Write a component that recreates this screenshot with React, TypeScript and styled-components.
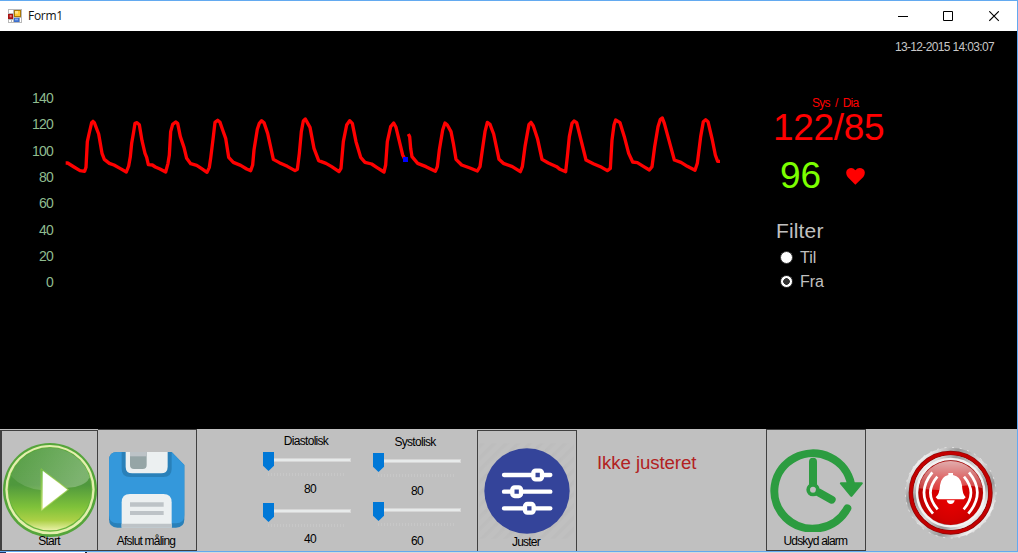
import React from 'react';
import styled, { createGlobalStyle } from 'styled-components';

const GlobalStyle = createGlobalStyle`
  * { box-sizing: border-box; }
  body { margin: 0; font-family: "Liberation Sans", Arial, sans-serif; }
  svg { display: block; flex: none; }
`;

const Screen = styled.div`
  width: 1018px;
  height: 553px;
  display: flex;
  flex-direction: column;
  overflow: hidden;
`;

const Window = styled.div`
  height: 552px;
  flex: none;
  display: flex;
  flex-direction: column;
  border: solid #63aaf0;
  border-width: 1px 1px 1px 0;
`;

const Desktop = styled.div`
  height: 1px;
  background: linear-gradient(90deg, #1d3563 6px, #fff 6px 85px, #222 85px 87px, #d9d9d9 87px);
`;

const TitleBar = styled.header`
  height: 30px;
  flex: none;
  display: flex;
  align-items: center;
  padding-left: 8px;
  background: #fff;
`;

const Title = styled.span`
  flex: 1;
  margin-left: 6px;
  font: 12px/16px "Open Sans", "Liberation Sans", sans-serif;
  letter-spacing: -0.3px;
  color: #111;
`;

const CaptionButton = styled.span`
  width: 46px;
  height: 29px;
  display: flex;
  align-items: center;
  justify-content: center;
`;

const Monitor = styled.main`
  height: 398px;
  flex: none;
  display: flex;
  background: #000;
`;

const Axis = styled.div`
  width: 54px;
  flex: none;
  padding: 54px 1px 0 0;
  text-align: right;
`;

const AxisLabel = styled.div`
  height: 26.35px;
  line-height: 26.3px;
  font-size: 14px;
  letter-spacing: -0.8px;
  color: #8fbc8f;
`;

const Readings = styled.section`
  flex: 1;
  display: flex;
  flex-direction: column;
  padding-left: 43px;
`;

const Text = styled.div<{ $size: number; $color: string; $track?: number; $line?: number; $top?: number; $left?: number }>`
  font-size: ${p => p.$size}px;
  line-height: ${p => p.$line ?? p.$size}px;
  letter-spacing: ${p => p.$track ?? 0}px;
  color: ${p => p.$color};
  margin-top: ${p => p.$top ?? 0}px;
  margin-left: ${p => p.$left ?? 0}px;
  white-space: pre;
`;

const Timestamp = styled(Text)`
  align-self: flex-end;
  margin-right: 23px;
`;

const PulseRow = styled.div`
  display: flex;
  align-items: center;
  gap: 25px;
  height: 40px;
  margin-top: 12px;
  padding-left: 7px;
`;

const RadioRow = styled.div`
  display: flex;
  align-items: center;
  gap: 7px;
  height: 24px;
  padding-left: 7px;
`;

const RadioGroup = styled.div`
  margin-top: 2px;
`;

const Radio = styled.span<{ $checked?: boolean }>`
  width: 13px;
  height: 13px;
  border-radius: 50%;
  border: 1px solid #333;
  background: ${p => (p.$checked ? 'radial-gradient(circle, #333 0 3px, #fff 3.6px)' : '#fff')};
`;

const Controls = styled.footer`
  height: 122px;
  flex: none;
  display: flex;
  align-items: flex-start;
  background: #c0c0c0;
`;

const Tile = styled.button<{ $w: number; $h: number; $top?: number; $left?: number; $sides?: string }>`
  display: grid;
  flex: none;
  width: ${p => p.$w}px;
  height: ${p => p.$h}px;
  margin: ${p => p.$top ?? 0}px 0 0 ${p => p.$left ?? 0}px;
  padding: 0;
  border: solid #404040;
  border-width: ${p => p.$sides ?? '1px'};
  background: #c0c0c0;
  font-family: inherit;
  overflow: hidden;
`;

const TileIcon = styled.span<{ $x: number; $y: number }>`
  grid-area: 1 / 1;
  place-self: start;
  margin: ${p => p.$y}px 0 0 ${p => p.$x}px;
`;

const TileCaption = styled.span`
  grid-area: 1 / 1;
  place-self: end center;
  margin: 0 2px 2px 0;
  font-size: 12px;
  line-height: 14px;
  letter-spacing: -0.8px;
  white-space: nowrap;
  color: #000;
`;

const SliderColumn = styled.div<{ $left: number; $top: number }>`
  width: 88px;
  flex: none;
  display: flex;
  flex-direction: column;
  margin-left: ${p => p.$left}px;
  padding-top: ${p => p.$top}px;
`;

const SliderText = styled.span<{ $top?: number; $shift?: number }>`
  align-self: center;
  margin: ${p => p.$top ?? 0}px 0 0 ${p => p.$shift ?? 0}px;
  font-size: 12px;
  line-height: 14px;
  letter-spacing: -0.7px;
  color: #000;
`;

const SliderBox = styled.div<{ $top: number }>`
  height: 24px;
  margin-top: ${p => p.$top}px;
  padding: 6px 0 0 2px;
`;

const Track = styled.div`
  height: 4px;
  background: #e7eaea;
  border: 1px solid #d6d6d6;
`;

const Thumb = styled.div`
  width: 11px;
  height: 19px;
  margin: -10px 0 0 -2px;
  background: #0078d7;
  clip-path: polygon(0 0, 100% 0, 100% 72%, 50% 100%, 0 72%);
`;

const Ticks = styled.div`
  height: 3px;
  margin: 2px 5px 0 3px;
  background: repeating-linear-gradient(90deg, #c7c7c7 0 1px, #c0c0c0 1px 3px);
`;

const AlarmButton = styled.div`
  margin: 18px 0 0 39px;
`;

const Slider = ({ top }: { top: number }) => (
  <SliderBox $top={top}>
    <Track />
    <Thumb />
    <Ticks />
  </SliderBox>
);

/* Trace samples, three units to a pixel */
const traceBefore =
  '197,489 203,489 222,501 240,512 254,514 258,502 262,425 267,402 275,368 279,364 283,368 296,402 306,460 313,478 328,490 342,495 360,505 379,516 386,498 391,470 395,430 401,395 405,370 411,368 418,374 426,422 435,460 440,472 445,494 457,495 466,501 480,507 497,516 504,490 508,465 512,395 518,373 527,366 533,370 541,410 552,442 560,475 572,491 590,496 605,506 621,517 628,502 632,475 640,410 645,367 653,361 660,367 668,390 677,415 686,472 700,487 722,496 740,507 752,512 758,495 762,450 772,388 778,370 785,362 792,368 803,400 820,478 838,488 862,499 885,512 892,508 898,460 904,395 910,363 916,357 922,368 930,382 942,445 956,482 978,490 995,500 1017,515 1023,505 1030,425 1040,375 1049,362 1057,370 1068,425 1082,472 1095,487 1115,492 1130,502 1152,516 1157,495 1162,425 1172,380 1181,369 1188,382 1208,465 1213,475';
const traceAfter =
  '1225,402 1229,410 1232,445 1236,470 1253,490 1278,500 1306,514 1312,500 1318,450 1328,390 1335,369 1342,375 1353,395 1360,430 1368,478 1385,495 1410,504 1432,513 1440,500 1447,450 1455,395 1462,367 1470,373 1481,402 1497,478 1510,490 1537,500 1561,515 1567,500 1575,440 1583,395 1587,373 1593,367 1600,378 1613,418 1626,478 1645,489 1670,500 1680,508 1697,515 1702,470 1708,410 1716,370 1722,363 1730,368 1743,420 1758,480 1780,491 1805,502 1822,512 1831,505 1836,420 1842,375 1847,360 1860,368 1873,410 1886,460 1898,486 1912,488 1930,499 1948,510 1956,500 1964,440 1974,380 1981,358 1987,354 1993,370 2008,425 2023,480 2043,487 2062,499 2085,511 2092,490 2102,410 2110,365 2117,359 2124,365 2137,420 2146,465 2153,484 2160,484';

const Trace = () => (
  <svg width="676" height="398" viewBox="162 93 2028 1194">
    <g fill="none" stroke="#f00" strokeWidth="10" strokeLinejoin="round">
      <polyline points={traceBefore} />
      <polyline points={traceAfter} />
    </g>
    <rect x="1209" y="471" width="15" height="15" fill="#00f" />
  </svg>
);

const FormIcon = () => (
  <svg width="14" height="14" viewBox="0 0 42 42">
    <rect width="42" height="42" fill="#b9b9b9" />
    <path d="M3 3h12v9H3zM3 33h6v6H3zM12 33h3v6h-3zM36 27h3v12h-3z" fill="#fff" />
    <rect x="18" y="3" width="21" height="21" fill="#a87908" />
    <rect x="21" y="6" width="15" height="15" fill="#fc3" />
    <rect x="21" y="6" width="9" height="8" fill="#ffe38a" />
    <rect x="0" y="15" width="15" height="15" fill="#a51212" />
    <rect x="5" y="18" width="6" height="7" fill="#ec7777" />
    <rect x="18" y="27" width="16" height="12" fill="#3c6fce" />
    <rect x="21" y="29" width="9" height="5" fill="#83aef2" />
  </svg>
);

const Heart = () => (
  <svg width="19" height="18" viewBox="0 0 57 54">
    <path d="M28 53 5 30Q-4 16 5 7q13-10 23 3Q39-3 52 7q9 9 0 23z" fill="#f00" />
  </svg>
);

const PlayIcon = () => (
  <svg width="96" height="96" viewBox="-144 -144 288 288">
    <defs>
      <linearGradient id="playFill" x1="0" y1="0" x2="0" y2="1">
        <stop offset="0" stopColor="#4e9a3c" />
        <stop offset=".45" stopColor="#4f983d" />
        <stop offset=".72" stopColor="#7fc23a" />
        <stop offset=".88" stopColor="#abd046" />
        <stop offset="1" stopColor="#eaf1a8" />
      </linearGradient>
      <linearGradient id="playGloss" x1="0" y1="0" x2="1" y2=".3">
        <stop offset="0" stopColor="#fff" stopOpacity=".04" />
        <stop offset="1" stopColor="#fff" stopOpacity=".26" />
      </linearGradient>
      <linearGradient id="playEdge" x1="0" y1="0" x2="1" y2="1">
        <stop offset="0" stopColor="#5bb440" />
        <stop offset=".5" stopColor="#d4e67c" />
        <stop offset="1" stopColor="#58ac35" />
      </linearGradient>
    </defs>
    <circle r="141" fill="#55a53b" />
    <circle r="134" cy="-1" fill="#e4efae" />
    <circle r="127" cy="-2" fill="#67b53d" />
    <circle r="124" cy="-3" fill="url(#playFill)" />
    <path d="M-117-42A124 124 0 0 1 119-38Q110-16 75-9L-22 1Q-80-3-117-42z" fill="url(#playGloss)" />
    <path d="M-27-64 56-1-27 64z" fill="url(#playEdge)" stroke="#8fc94a" strokeWidth="2" />
    <path d="M-22-58 52-1-22 56z" fill="#fff" />
  </svg>
);

const SaveIcon = () => (
  <svg width="76" height="76" viewBox="0 0 228 228">
    <path d="M25 0h163l38 39v163q0 25-25 25H25Q0 227 0 202V25Q0 0 25 0z" fill="#2980b9" />
    <path d="M25 0h163l38 39v150q0 25-25 25H25Q0 214 0 189V25Q0 0 25 0z" fill="#3498db" />
    <path d="M38 0h150v50q0 25-25 25H63Q38 75 38 50z" fill="#2980b9" />
    <path d="M50 0h126v44q0 20-20 20H70Q50 64 50 44z" fill="#ecf0f1" />
    <path d="M63 0h50v39q0 12-12 12H75Q63 51 63 39z" fill="#95a5a6" />
    <path d="M63 0h50v13H63z" fill="#bdc3c7" />
    <path d="M38 227v-76q0-25 25-25h100q25 0 25 25v76z" fill="#ecf0f1" />
    <path d="M38 215h150v12H38zM63 151h101v13H63zM63 177h101v12H63z" fill="#bdc3c7" />
  </svg>
);

const AdjustIcon = () => (
  <svg width="98" height="98" viewBox="-147 -147 294 294">
    <defs>
      <pattern id="hatch" width="25" height="25" patternUnits="userSpaceOnUse" patternTransform="rotate(45)">
        <rect width="10" height="25" fill="#b8b8b8" />
      </pattern>
      <radialGradient id="hatchFade">
        <stop offset=".75" stopColor="#fff" />
        <stop offset="1" stopColor="#555" />
      </radialGradient>
      <mask id="hatchMask">
        <rect x="-147" y="-147" width="294" height="294" fill="url(#hatchFade)" />
      </mask>
    </defs>
    <rect x="-143" y="-143" width="284" height="286" fill="url(#hatch)" mask="url(#hatchMask)" />
    <circle r="128" fill="#34449a" />
    <path d="M-69-48H70M-69 2H70M-69 52H70" stroke="#fff" strokeWidth="13" strokeLinecap="round" />
    <g fill="#34449a" stroke="#fff" strokeWidth="13">
      <rect x="19" y="-61" width="26" height="26" rx="7" />
      <rect x="-44" y="-11" width="26" height="26" rx="7" />
      <rect x="-6" y="39" width="26" height="26" rx="7" />
    </g>
  </svg>
);

const SnoozeIcon = () => (
  <svg width="94" height="84" viewBox="0 0 282 252">
    <g fill="none" stroke="#2c9c40" strokeWidth="24" strokeLinecap="round">
      <path d="M243 108A116 113 0 1 0 232 181" />
      <path d="M129 41v70M145 133l40 22" />
      <circle cx="129" cy="125" r="14" strokeWidth="12" />
    </g>
    <circle cx="129" cy="125" r="8.5" fill="#c0c0c0" />
    <path d="M213 106h62l-31 37z" fill="#2c9c40" stroke="#2c9c40" strokeWidth="7" strokeLinejoin="round" />
  </svg>
);

const AlarmIcon = () => (
  <svg width="92" height="92" viewBox="0 0 276 276">
    <defs>
      <linearGradient id="chrome" x1="0" y1="0" x2="1" y2="1">
        <stop offset="0" stopColor="#aaa" />
        <stop offset=".15" stopColor="#f0f0f0" />
        <stop offset=".3" stopColor="#999" />
        <stop offset=".5" stopColor="#ddd" />
        <stop offset=".68" stopColor="#999" />
        <stop offset=".82" stopColor="#f0f0f0" />
        <stop offset="1" stopColor="#888" />
      </linearGradient>
      <radialGradient id="alarmFill" cy=".62" r=".6">
        <stop offset="0" stopColor="#e80000" />
        <stop offset=".5" stopColor="#d40000" />
        <stop offset="1" stopColor="#a80000" />
      </radialGradient>
      <linearGradient id="alarmGloss" x1="0" y1="0" x2="0" y2="1">
        <stop offset="0" stopColor="#fff" stopOpacity=".68" />
        <stop offset="1" stopColor="#fff" stopOpacity=".22" />
      </linearGradient>
    </defs>
    <circle cx="137" cy="137" r="135" fill="url(#chrome)" />
    <circle cx="137" cy="137" r="136" fill="none" stroke="#f4f4f4" strokeWidth="2" strokeDasharray="6 17" />
    <circle cx="137" cy="137" r="119" fill="none" stroke="#8f0808" strokeWidth="14" />
    <circle cx="137" cy="137" r="119" fill="none" stroke="#c40000" strokeWidth="9" />
    <circle cx="137" cy="137" r="112" fill="url(#chrome)" />
    <circle cx="137" cy="137" r="101" fill="none" stroke="#f3f3f3" strokeWidth="7" />
    <circle cx="137" cy="137" r="97" fill="url(#alarmFill)" />
    <path d="M42 124A96 96 0 0 1 232 124Q190 112 170 117Q120 137 42 124z" fill="url(#alarmGloss)" />
    <g fill="#fff">
      <path d="M130 84v-6h14v6q23 4 27 31 1 27 11 36l-6 6H98l-6-6q12-9 13-36 3-26 25-31z" />
      <path d="M125 160h24q-2 11-12 11t-12-11z" />
    </g>
    <g fill="none" stroke="#fff" strokeWidth="8">
      <path d="M82 76Q31 138 84 200M97 89Q55 138 98 187" />
      <path d="M192 76Q243 138 190 200M177 89Q219 138 176 187" />
    </g>
  </svg>
);

const App = () => (
  <Screen>
    <GlobalStyle />
    <Window>
      <TitleBar>
        <FormIcon />
        <Title>Form1</Title>
        <CaptionButton>
          <svg width="11" height="11"><path d="M1 5.5h10" stroke="#000" /></svg>
        </CaptionButton>
        <CaptionButton>
          <svg width="11" height="11"><path d="M.5.5h9v9h-9z" fill="none" stroke="#000" /></svg>
        </CaptionButton>
        <CaptionButton>
          <svg width="11" height="11"><path d="M.3.3l9.500 9.500M9.800.3l-9.500 9.500" stroke="#000" strokeWidth="1.1" /></svg>
        </CaptionButton>
      </TitleBar>

      <Monitor>
        <Axis>
          {[140, 120, 100, 80, 60, 40, 20, 0].map(v => (
            <AxisLabel key={v}>{v}</AxisLabel>
          ))}
        </Axis>
        <Trace />
        <Readings>
          <Timestamp $size={12} $line={14} $color="#c8c8c8" $track={-0.65} $top={9}>13-12-2015 14:03:07</Timestamp>
          <Text $size={12} $line={12} $color="#f00" $track={-0.75} $top={43} $left={39}>{'Sys  /  Dia'}</Text>
          <Text $size={37} $line={32} $color="#f00" $track={-0.3} $top={3}>122/85</Text>
          <PulseRow>
            <Text $size={37} $line={40} $color="#7cff00">96</Text>
            <Heart />
          </PulseRow>
          <Text $size={21} $line={24} $color="#c0c0c0" $track={0.15} $top={23} $left={3}>Filter</Text>
          <RadioGroup>
            <RadioRow>
              <Radio />
              <Text $size={16} $line={20} $color="#c0c0c0" $top={2}>Til</Text>
            </RadioRow>
            <RadioRow>
              <Radio $checked />
              <Text $size={16} $line={20} $color="#c0c0c0" $top={2}>Fra</Text>
            </RadioRow>
          </RadioGroup>
        </Readings>
      </Monitor>

      <Controls>
        <Tile $w={98} $h={121} $top={1} $sides="1px 1px 1px 2px">
          <TileIcon $x={0} $y={11}><PlayIcon /></TileIcon>
          <TileCaption>Start</TileCaption>
        </Tile>
        <Tile $w={99} $h={122} $sides="1px 1px 1px 0">
          <TileIcon $x={11} $y={22}><SaveIcon /></TileIcon>
          <TileCaption>Afslut måling</TileCaption>
        </Tile>

        <SliderColumn $left={66} $top={5}>
          <SliderText $shift={-2}>Diastolisk</SliderText>
          <Slider top={4} />
          <SliderText $top={6} $shift={6}>80</SliderText>
          <Slider top={7} />
          <SliderText $top={5} $shift={6}>40</SliderText>
        </SliderColumn>
        <SliderColumn $left={22} $top={6}>
          <SliderText $shift={-4}>Systolisk</SliderText>
          <Slider top={4} />
          <SliderText $top={7}>80</SliderText>
          <Slider top={4} />
          <SliderText $top={8}>60</SliderText>
        </SliderColumn>

        <Tile $w={100} $h={121} $top={1} $left={16} $sides="1px 1px 0 1px">
          <TileIcon $x={0} $y={11}><AdjustIcon /></TileIcon>
          <TileCaption>Juster</TileCaption>
        </Tile>
        <Text $size={18.67} $line={22} $color="#b22222" $track={-0.1} $top={23} $left={20}>Ikke justeret</Text>

        <Tile $w={100} $h={122} $left={70}>
          <TileIcon $x={3} $y={18}><SnoozeIcon /></TileIcon>
          <TileCaption>Udskyd alarm</TileCaption>
        </Tile>
        <AlarmButton><AlarmIcon /></AlarmButton>
      </Controls>
    </Window>
    <Desktop />
  </Screen>
);

export default App;
